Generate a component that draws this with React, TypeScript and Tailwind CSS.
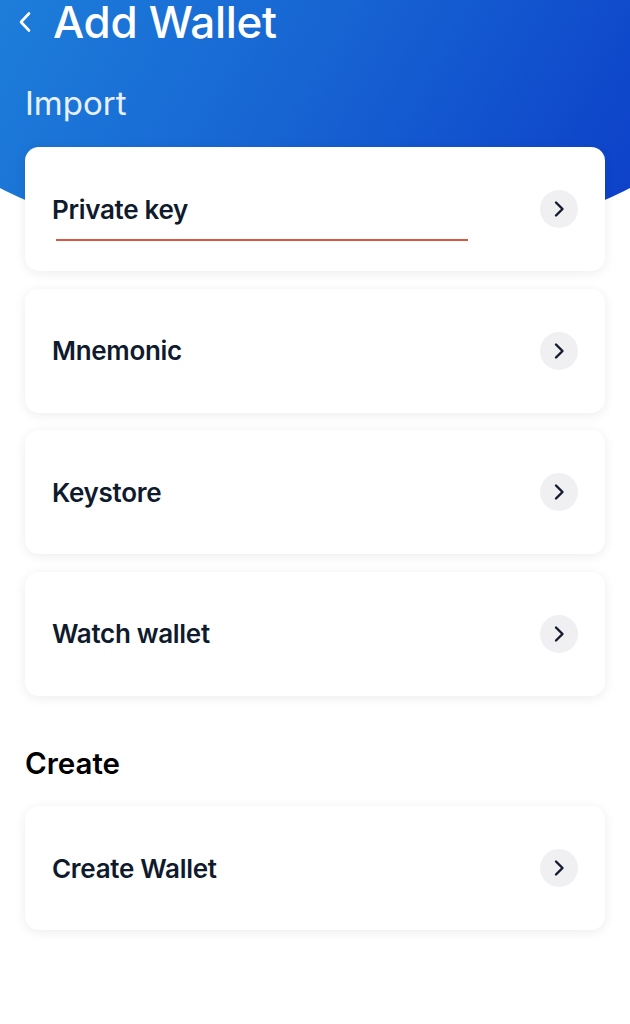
import React from "react";

function Chevron() {
  return (
    <div className="w-[38px] h-[38px] rounded-full bg-[#f0f0f3] flex items-center justify-center">
      <svg width="14" height="18" viewBox="0 0 14 18" fill="none">
        <path d="M4 2.5 L10.5 9 L4 15.5" stroke="#14192b" strokeWidth="2.4" strokeLinecap="round" strokeLinejoin="round" />
      </svg>
    </div>
  );
}

function Card({ label, underline }: { label: string; underline?: boolean }) {
  return (
    <div className="relative h-[124px] bg-white rounded-[14px] shadow-[0_2px_12px_rgba(0,0,0,0.08)] flex items-center justify-between pl-[27px] pr-[27px]">
      <span className="text-[26px] font-semibold text-[#0f1b2d] tracking-[-0.3px]">{label}</span>
      <Chevron />
      {underline && <div className="absolute left-[31px] top-[92px] w-[412px] h-[2px] bg-[#dc5646]" />}
    </div>
  );
}

export default function App() {
  return (
    <div className="relative w-[630px] h-[1024px] bg-white overflow-hidden" style={{ fontFamily: "Inter, 'Noto Sans', sans-serif" }}>
      <div className="absolute left-0 top-0 w-[630px] h-[260px] bg-[linear-gradient(120deg,#1d7ed9_0%,#1764d3_45%,#0c3ec8_100%)] [clip-path:ellipse(400px_164px_at_315px_87px)]" />
      <div className="relative">
        <div className="flex items-center h-[44px] pl-[17px]">
          <svg width="16" height="22" viewBox="0 0 16 22" fill="none" className="mr-[20px]">
            <path d="M12 2.5 L4 11 L12 19.5" stroke="white" strokeWidth="2.6" strokeLinecap="round" strokeLinejoin="round" />
          </svg>
          <span className="text-[44px] font-medium text-white leading-none tracking-[-0.3px]">Add Wallet</span>
        </div>
        <div className="pl-[25px] mt-[43px] text-[33px] text-white/90 leading-none">Import</div>
        <div className="px-[25px] mt-[27px] flex flex-col gap-[17.5px]">
          <Card label="Private key" underline />
          <Card label="Mnemonic" />
          <Card label="Keystore" />
          <Card label="Watch wallet" />
        </div>
        <div className="pl-[25px] mt-[53px] text-[29.5px] font-semibold text-black leading-none">Create</div>
        <div className="px-[25px] mt-[28px]">
          <Card label="Create Wallet" />
        </div>
      </div>
    </div>
  );
}
